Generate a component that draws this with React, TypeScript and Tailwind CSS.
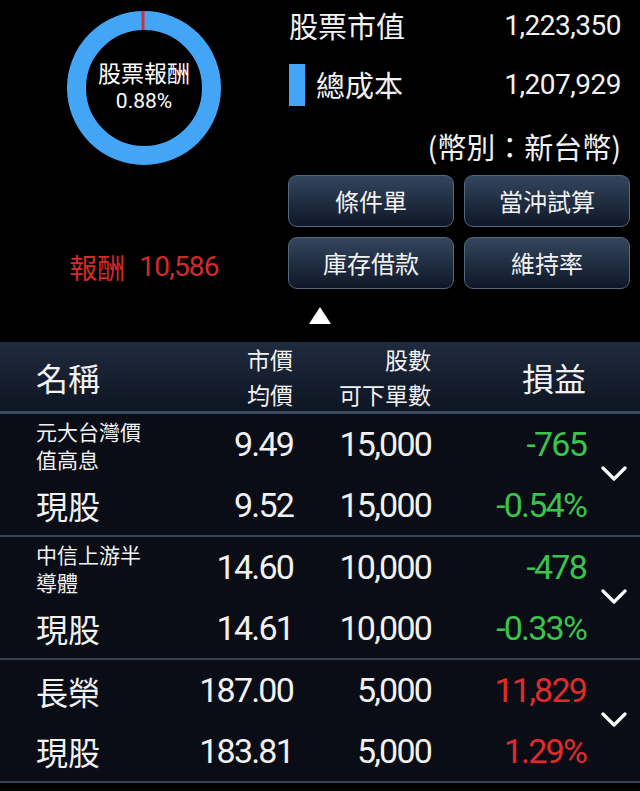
import React from 'react'

const cjk = { fontFamily: '"Noto Sans CJK TC", "Noto Sans", sans-serif' }
const num = { fontFamily: 'Roboto, "Noto Sans CJK TC", sans-serif' }

interface Holding {
  name: string[]
  type: string
  price: string
  avg: string
  shares: string
  orderable: string
  pnl: string
  pct: string
  up: boolean
}

const holdings: Holding[] = [
  { name: ['元大台灣價', '值高息'], type: '現股', price: '9.49', avg: '9.52', shares: '15,000', orderable: '15,000', pnl: '-765', pct: '-0.54%', up: false },
  { name: ['中信上游半', '導體'], type: '現股', price: '14.60', avg: '14.61', shares: '10,000', orderable: '10,000', pnl: '-478', pct: '-0.33%', up: false },
  { name: ['長榮'], type: '現股', price: '187.00', avg: '183.81', shares: '5,000', orderable: '5,000', pnl: '11,829', pct: '1.29%', up: true },
]

function Donut() {
  return (
    <div className="relative w-[156px] h-[156px]">
      <svg width="156" height="156" viewBox="0 0 156 156">
        <circle cx="78" cy="78" r="67.5" fill="none" stroke="#42a5f5" strokeWidth="19" />
        <rect x="75.5" y="1" width="3" height="19" fill="#d32f2f" />
      </svg>
      <div className="absolute inset-0 flex flex-col items-center justify-center text-white pb-[3px]" style={cjk}>
        <span className="text-[23px] leading-[29px]">股票報酬</span>
        <span className="text-[21px] leading-[29px]" style={num}>0.88%</span>
      </div>
    </div>
  )
}

function ActionButton({ label }: { label: string }) {
  return (
    <button
      className="h-[52px] rounded-[9px] border border-[#56667c] bg-gradient-to-b from-[#34465e] to-[#0f1828] text-[24px] text-[#f2f2f2]"
      style={cjk}
    >
      {label}
    </button>
  )
}

function Chevron() {
  return (
    <svg width="26" height="16" viewBox="0 0 26 16">
      <polyline points="2,2 13,13 24,2" fill="none" stroke="#ffffff" strokeWidth="3.2" strokeLinecap="round" strokeLinejoin="round" />
    </svg>
  )
}

function HoldingRow({ h }: { h: Holding }) {
  const color = h.up ? 'text-[#e02b2b]' : 'text-[#3cc34b]'
  return (
    <div className="grid grid-cols-[150px_107px_138px_155px_1fr] pl-[36px] h-[123px] border-b-2 border-[#33435a] bg-[#0a0d16] text-[#f2f2f2]">
      <div className="flex flex-col" style={cjk}>
        <div className="h-[61px] flex flex-col justify-center">
          {h.name.length > 1 ? (
            h.name.map((n) => (
              <span key={n} className="text-[21px] leading-[28px]">{n}</span>
            ))
          ) : (
            <span className="text-[32px] leading-[36px]">{h.name[0]}</span>
          )}
        </div>
        <div className="h-[60px] flex items-center text-[32px]">{h.type}</div>
      </div>
      <div className="flex flex-col items-end text-[34px] tracking-[-1.8px]" style={num}>
        <div className="h-[61px] flex items-center">{h.price}</div>
        <div className="h-[60px] flex items-center">{h.avg}</div>
      </div>
      <div className="flex flex-col items-end text-[34px] tracking-[-1.8px]" style={num}>
        <div className="h-[61px] flex items-center">{h.shares}</div>
        <div className="h-[60px] flex items-center">{h.orderable}</div>
      </div>
      <div className={`flex flex-col items-end text-[34px] tracking-[-1.8px] ${color}`} style={num}>
        <div className="h-[61px] flex items-center">{h.pnl}</div>
        <div className="h-[60px] flex items-center">{h.pct}</div>
      </div>
      <div className="flex items-center justify-center pl-[2px] pb-[2px]">
        <Chevron />
      </div>
    </div>
  )
}

export default function App() {
  return (
    <div className="w-[640px] h-[791px] bg-black overflow-hidden" style={cjk}>
      <div className="h-[342px] flex flex-col">
        <div className="flex">
          <div className="w-[288px] flex flex-col items-center">
            <div className="mt-[10px]">
              <Donut />
            </div>
            <div className="mt-[84px] flex items-center text-[28px] text-[#d42a2a] leading-[34px]">
              <span>報酬</span>
              <span className="ml-[14px] tracking-[-0.8px]" style={num}>10,586</span>
            </div>
          </div>
          <div className="flex-1 pr-[10px] text-[#f2f2f2]">
            <div className="h-[52px] flex items-center justify-between pl-px pr-[9px]">
              <span className="text-[29px]">股票市值</span>
              <span className="text-[28px] tracking-[-0.5px]" style={num}>1,223,350</span>
            </div>
            <div className="h-[66px] flex items-center justify-between pl-px pr-[9px]">
              <span className="flex items-center gap-[11px] text-[29px]">
                <span className="w-[16px] h-[42px] bg-[#42a5f5]" />
                總成本
              </span>
              <span className="text-[28px] tracking-[-0.5px]" style={num}>1,207,929</span>
            </div>
            <div className="h-[57px] flex items-center justify-end pr-[9px] text-[29px]">(幣別：新台幣)</div>
            <div className="grid grid-cols-2 gap-[10px]">
              <ActionButton label="條件單" />
              <ActionButton label="當沖試算" />
              <ActionButton label="庫存借款" />
              <ActionButton label="維持率" />
            </div>
          </div>
        </div>
        <div className="flex justify-center mt-[18px]">
          <svg width="22" height="17" viewBox="0 0 22 17">
            <polygon points="11,0 22,17 0,17" fill="#ffffff" />
          </svg>
        </div>
      </div>
      <div className="grid grid-cols-[150px_107px_138px_155px_1fr] pl-[36px] h-[72px] border-b-[3px] border-[#3a4a60] bg-gradient-to-b from-[#1f2b3e] to-[#0e1523] text-[#f2f2f2]">
        <div className="flex items-center text-[32px]">名稱</div>
        <div className="flex flex-col items-end justify-center text-[23px] leading-[35px]">
          <span>市價</span>
          <span>均價</span>
        </div>
        <div className="flex flex-col items-end justify-center text-[23px] leading-[35px]">
          <span>股數</span>
          <span>可下單數</span>
        </div>
        <div className="flex items-center justify-end text-[32px]">損益</div>
        <div />
      </div>
      {holdings.map((h) => (
        <HoldingRow key={h.name[0]} h={h} />
      ))}
    </div>
  )
}
